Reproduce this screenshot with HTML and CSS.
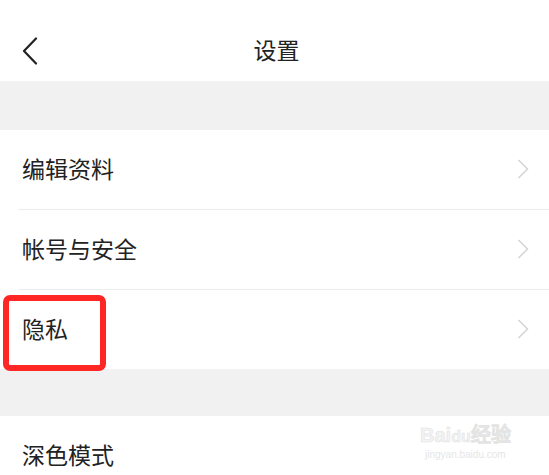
FILE: index.html
```html
<!DOCTYPE html>
<html lang="zh-CN">
<head>
<meta charset="utf-8">
<title>设置</title>
<link rel="stylesheet" href="styles.css">
</head>
<body>
<div class="page">
  <header class="topbar">
    <svg class="back" width="16" height="28" viewBox="0 0 16 28"><path d="M14 1.5 L2 14 L14 26.5" fill="none" stroke="#222" stroke-width="2.2" stroke-linecap="round" stroke-linejoin="round"/></svg>
    <h1 class="title">设置</h1>
  </header>
  <div class="gap"></div>
  <section class="group">
    <div class="row"><span class="label">编辑资料</span><svg class="chev" width="12" height="20" viewBox="0 0 12 20"><path d="M1.5 1 L10.5 10 L1.5 19" fill="none" stroke="#d2d2d2" stroke-width="1.4"/></svg></div>
    <div class="row"><span class="label">帐号与安全</span><svg class="chev" width="12" height="20" viewBox="0 0 12 20"><path d="M1.5 1 L10.5 10 L1.5 19" fill="none" stroke="#d2d2d2" stroke-width="1.4"/></svg></div>
    <div class="row"><span class="label">隐私</span><svg class="chev" width="12" height="20" viewBox="0 0 12 20"><path d="M1.5 1 L10.5 10 L1.5 19" fill="none" stroke="#d2d2d2" stroke-width="1.4"/></svg></div>
  </section>
  <div class="gap gap-b"></div>
  <section class="group">
    <div class="row"><span class="label">深色模式</span></div>
  </section>
  <div class="highlight"></div>
  <div class="watermark"><span class="wm-logo">Bai<span class="wm-du">du</span>经验</span><span class="wm-url">jingyan.baidu.com</span></div>
</div>
</body>
</html>
```
FILE: styles.css
```css
* { box-sizing: border-box; }
html, body { margin: 0; padding: 0; background: #fff; }
body {
  font-family: "Noto Sans CJK SC", "Noto Sans", sans-serif;
  color: #222;
  width: 549px;
  height: 475px;
  overflow: hidden;
}
.page { position: relative; width: 549px; height: 475px; overflow: hidden; }
.topbar {
  height: 81px;
  display: flex;
  align-items: center;
  justify-content: center;
  position: relative;
  background: #fff;
}
.back { position: absolute; left: 22px; top: 37px; }
.title {
  margin: 0;
  font-size: 23px;
  font-weight: 400;
  line-height: 1;
  color: #222;
  padding-top: 17px;
  padding-left: 4px;
}
.gap { height: 49px; background: #f1f1f1; }
.gap-b { height: 47px; }
.group { background: #fff; padding-left: 18px; }
.row {
  height: 80px;
  display: flex;
  align-items: center;
  justify-content: space-between;
  padding-left: 4px;
  padding-right: 20px;
  padding-bottom: 3px;
  border-bottom: 1px solid #ececec;
}
.row .chev { margin-top: 1px; }
.group .row:last-child { border-bottom: none; height: 79px; }
.label { font-size: 23px; line-height: 1; color: #222; }
.chev { display: block; }
.highlight {
  position: absolute;
  left: 3px;
  top: 295px;
  width: 103px;
  height: 76px;
  border: 6px solid #ff2626;
  border-radius: 7px;
}
.watermark {
  position: absolute;
  left: 420px;
  top: 425px;
  display: flex;
  flex-direction: column;
  align-items: center;
  color: #f3f3f3;
  font-family: "Liberation Sans", sans-serif;
}
.wm-logo { font-size: 20px; font-weight: 700; line-height: 1; -webkit-text-stroke: 0.6px #e4e4e4; }
.wm-du { font-size: 16px; }
.wm-url { font-size: 10px; line-height: 1.2; margin-top: 4px; color: #e6e6e6; }
```
